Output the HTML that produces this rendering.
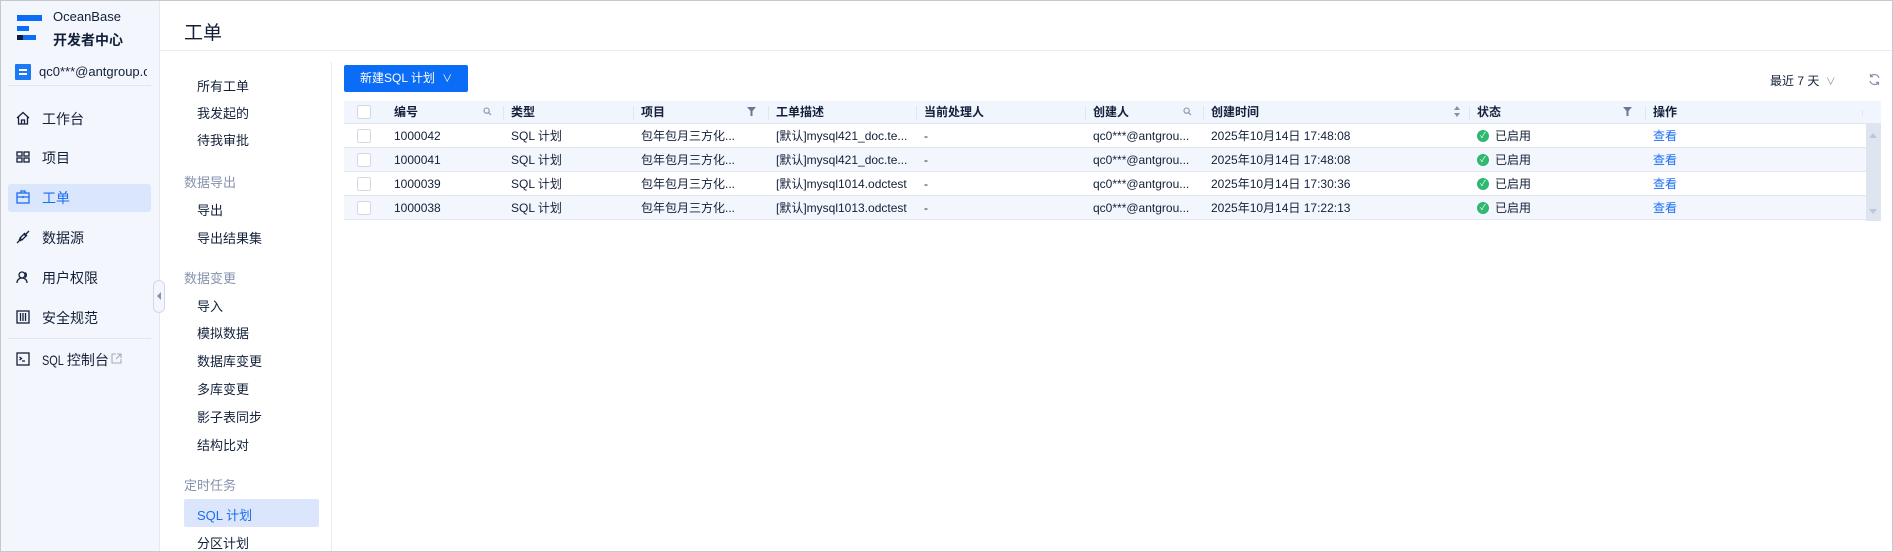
<!DOCTYPE html><html><head><meta charset="utf-8"><style>
*{box-sizing:border-box;margin:0;padding:0}
body{width:1893px;height:552px;overflow:hidden;background:#fff;font-family:"Liberation Sans","Noto Sans CJK SC",sans-serif;color:#132039;position:relative}
.a{position:absolute;white-space:nowrap}
#frame{position:absolute;left:0;top:0;width:1893px;height:552px;border:1px solid #c8c8c8;pointer-events:none}
.side{left:0;top:0;width:160px;height:552px;background:#f3f6fc;border-right:1px solid #e5e8ef}
.mi{font-size:14px;color:#132039;left:42px}
.ic{left:15px;width:16px;height:16px}
.sub{font-size:13px;color:#132039;left:197px}
.grp{font-size:13px;color:#8592ad;left:184px}
.th{font-size:12px;font-weight:bold;color:#132039;line-height:23px}
.td{font-size:12px;color:#132039;line-height:24px}
.cb{width:14px;height:14px;border:1px solid #d3d8e2;border-radius:2px;background:#fff;left:357px}
.row{left:344px;width:1522px;height:24px;border-bottom:1px solid #e2e6ee}
.sep{width:1px;height:14px;background:#e2e6ee;top:106px}
.ok{width:12px;height:12px;border-radius:50%;background:#2eb872;color:#fff;font-size:8px;line-height:12px;text-align:center}
</style></head><body>
<div class="a side"></div>
<div class="a" style="left:17px;top:15px;width:25px;height:6px;background:#0b6cf7"></div>
<div class="a" style="left:17px;top:26px;width:12px;height:5px;background:#0b6cf7"></div>
<div class="a" style="left:17px;top:35px;width:6px;height:5px;background:#0a1a3a"></div>
<div class="a" style="left:23px;top:35px;width:13px;height:5px;background:#0b6cf7"></div>
<div class="a" style="left:53px;top:9px;font-size:13px">OceanBase</div>
<div class="a" style="left:53px;top:30px;font-size:14px;font-weight:bold">开发者中心</div>
<div class="a" style="left:15px;top:64px;width:16px;height:16px;background:#1b79f5;border-radius:1px"><div style="margin:5px 4px;width:8px;height:6px;border-top:2px solid #fff;border-bottom:2px solid #fff"></div></div>
<div class="a" style="left:39px;top:64px;width:108px;overflow:hidden;font-size:13px">qc0***@antgroup.com</div>
<div class="a" style="left:8px;top:85px;width:143px;height:1px;background:#e1e6ef"></div>
<div class="a" style="left:8px;top:184px;width:143px;height:28px;background:#d9e6fb;border-radius:3px"></div>
<svg class="a ic" style="top:110px" viewBox="0 0 16 16" fill="none" stroke="#132039" stroke-width="1.3"><path d="M2 8L8 2.5 14 8M3.5 6.5V14h9V6.5M6.5 14v-4h3v4"/></svg>
<div class="a mi" style="top:109px">工作台</div>
<svg class="a ic" style="top:149px" viewBox="0 0 16 16" fill="none" stroke="#132039" stroke-width="1.3"><rect x="2" y="3" width="5" height="4"/><rect x="9" y="3" width="5" height="4"/><rect x="2" y="9" width="5" height="4"/><rect x="9" y="9" width="5" height="4"/></svg>
<div class="a mi" style="top:148px">项目</div>
<svg class="a ic" style="top:189px" viewBox="0 0 16 16" fill="none" stroke="#1b6ef3" stroke-width="1.3"><rect x="2" y="4" width="12" height="10"/><path d="M6 4V2h4v2M2 8h12M8 7v2"/></svg>
<div class="a mi" style="top:188px;color:#1b6ef3">工单</div>
<svg class="a ic" style="top:229px" viewBox="0 0 16 16" fill="none" stroke="#132039" stroke-width="1.3"><path d="M2 14l3-3M11 5l3-3M5 9l4-4 2 2-4 4zM4 10l2 2M9 4l3 3"/></svg>
<div class="a mi" style="top:228px">数据源</div>
<svg class="a ic" style="top:269px" viewBox="0 0 16 16" fill="none" stroke="#132039" stroke-width="1.3"><circle cx="7" cy="6" r="3"/><path d="M2 14c0-3 2-5 5-5s5 2 5 5M10 3.5a3 3 0 010 5"/></svg>
<div class="a mi" style="top:268px">用户权限</div>
<svg class="a ic" style="top:309px" viewBox="0 0 16 16" fill="none" stroke="#132039" stroke-width="1.3"><rect x="2" y="2" width="12" height="12"/><path d="M5.5 4v8M8 4v8M10.5 4v8"/></svg>
<div class="a mi" style="top:308px">安全规范</div>
<div class="a" style="left:8px;top:338px;width:143px;height:1px;background:#e1e6ef"></div>
<svg class="a ic" style="top:351px" viewBox="0 0 16 16" fill="none" stroke="#132039" stroke-width="1.3"><rect x="2" y="2" width="12" height="12"/><path d="M4.5 6l2 1.5-2 1.5M7 10h3"/></svg>
<div class="a mi" style="top:350px"><span style="display:inline-block;transform:scaleX(.78);transform-origin:0 50%;margin-right:-7px">SQL</span> 控制台</div>
<svg class="a" style="left:111px;top:353px" width="11" height="11" viewBox="0 0 11 11" fill="none" stroke="#a3acbe" stroke-width="1.1"><path d="M5 1H1v9h9V6M6 1h4v4M10 1L5 6"/></svg>
<div class="a" style="left:153px;top:280px;width:12px;height:33px;border:1px solid #d3d9e4;border-radius:6px;background:#f3f6fc"></div>
<div class="a" style="left:157px;top:292px;width:0;height:0;border-top:4px solid transparent;border-bottom:4px solid transparent;border-right:4px solid #8592ad"></div>
<div class="a" style="left:184px;top:18px;font-size:19px">工单</div>
<div class="a" style="left:160px;top:50px;width:1733px;height:1px;background:#e8ebf1"></div>
<div class="a" style="left:331px;top:62px;width:1px;height:490px;background:#e8ebf1"></div>
<div class="a sub" style="top:76px">所有工单</div>
<div class="a sub" style="top:103px">我发起的</div>
<div class="a sub" style="top:130px">待我审批</div>
<div class="a grp" style="top:172px">数据导出</div>
<div class="a sub" style="top:200px">导出</div>
<div class="a sub" style="top:228px">导出结果集</div>
<div class="a grp" style="top:268px">数据变更</div>
<div class="a sub" style="top:296px">导入</div>
<div class="a sub" style="top:323px">模拟数据</div>
<div class="a sub" style="top:351px">数据库变更</div>
<div class="a sub" style="top:379px">多库变更</div>
<div class="a sub" style="top:407px">影子表同步</div>
<div class="a sub" style="top:435px">结构比对</div>
<div class="a grp" style="top:475px">定时任务</div>
<div class="a" style="left:184px;top:499px;width:135px;height:28px;background:#dbe5fb;border-radius:2px"></div>
<div class="a sub" style="top:505px;color:#1b6ef3">SQL 计划</div>
<div class="a sub" style="top:533px">分区计划</div>
<div class="a" style="left:344px;top:65px;width:124px;height:27px;background:#0b6cf7;border-radius:2px;color:#fff;font-size:12px;line-height:27px;padding-left:16px">新建SQL 计划 <span style="font-size:10px;margin-left:4px">∨</span></div>
<div class="a" style="left:1770px;top:72px;font-size:12px;color:#132039">最近 7 天 <span style="color:#8592ad;font-size:10px;margin-left:3px">∨</span></div>
<svg class="a" style="left:1868px;top:73px" width="13" height="13" viewBox="0 0 13 13" fill="none" stroke="#8592ad" stroke-width="1.2"><path d="M11 5A4.8 4.8 0 002.5 3.5M2 8a4.8 4.8 0 008.5 1.5M2.5 1v2.7h2.7M10.5 12V9.3H7.8"/></svg>
<div class="a" style="left:344px;top:101px;width:1537px;height:23px;background:#f1f5fd;border-bottom:1px solid #e2e6ee"></div>
<div class="a" style="left:1866px;top:124px;width:15px;height:97px;background:#dfe5f0"></div>
<div class="a" style="left:1869px;top:133px;border-left:4px solid transparent;border-right:4px solid transparent;border-bottom:5px solid #bfc7d6"></div>
<div class="a" style="left:1869px;top:209px;border-left:4px solid transparent;border-right:4px solid transparent;border-top:5px solid #bfc7d6"></div>
<div class="a row" style="top:124px;background:#fff"></div>
<div class="a row" style="top:148px;background:#f3f6fc"></div>
<div class="a row" style="top:172px;background:#fff"></div>
<div class="a row" style="top:196px;background:#f3f6fc"></div>
<div class="a cb" style="top:105px"></div><div class="a cb" style="top:129px"></div><div class="a cb" style="top:153px"></div><div class="a cb" style="top:177px"></div><div class="a cb" style="top:201px"></div>
<div class="a th" style="left:394px;top:101px">编号</div>
<div class="a sep" style="left:503px"></div>
<div class="a th" style="left:511px;top:101px">类型</div>
<div class="a sep" style="left:633px"></div>
<div class="a th" style="left:641px;top:101px">项目</div>
<div class="a sep" style="left:768px"></div>
<div class="a th" style="left:776px;top:101px">工单描述</div>
<div class="a sep" style="left:916px"></div>
<div class="a th" style="left:924px;top:101px">当前处理人</div>
<div class="a sep" style="left:1085px"></div>
<div class="a th" style="left:1093px;top:101px">创建人</div>
<div class="a sep" style="left:1203px"></div>
<div class="a th" style="left:1211px;top:101px">创建时间</div>
<div class="a sep" style="left:1469px"></div>
<div class="a th" style="left:1477px;top:101px">状态</div>
<div class="a sep" style="left:1645px"></div>
<div class="a th" style="left:1653px;top:101px">操作</div>
<div class="a sep" style="left:1862px;height:6px;top:110px"></div>
<svg class="a" style="left:483px;top:107px" width="9" height="9" viewBox="0 0 9 9" fill="none" stroke="#8592ad" stroke-width="1.1"><circle cx="3.6" cy="3.6" r="2.6"/><path d="M5.5 5.5L8 8"/></svg>
<svg class="a" style="left:1183px;top:107px" width="9" height="9" viewBox="0 0 9 9" fill="none" stroke="#8592ad" stroke-width="1.1"><circle cx="3.6" cy="3.6" r="2.6"/><path d="M5.5 5.5L8 8"/></svg>
<svg class="a" style="left:747px;top:107px" width="9" height="9" viewBox="0 0 9 9" fill="#6b7891"><path d="M0 0h9L5.5 4v5h-2V4z"/></svg>
<svg class="a" style="left:1623px;top:107px" width="9" height="9" viewBox="0 0 9 9" fill="#6b7891"><path d="M0 0h9L5.5 4v5h-2V4z"/></svg>
<svg class="a" style="left:1453px;top:105px" width="8" height="13" viewBox="0 0 8 13" fill="#8592ad"><path d="M4 1l3 4H1zM4 12l3-4H1z"/></svg>
<div class="a td" style="left:394px;top:124px">1000042</div><div class="a td" style="left:511px;top:124px">SQL 计划</div><div class="a td" style="left:641px;top:124px">包年包月三方化...</div><div class="a td" style="left:776px;top:124px">[默认]mysql421_doc.te...</div><div class="a td" style="left:924px;top:124px">-</div><div class="a td" style="left:1093px;top:124px">qc0***@antgrou...</div><div class="a td" style="left:1211px;top:124px">2025年10月14日 17:48:08</div>
<div class="a td" style="left:394px;top:148px">1000041</div><div class="a td" style="left:511px;top:148px">SQL 计划</div><div class="a td" style="left:641px;top:148px">包年包月三方化...</div><div class="a td" style="left:776px;top:148px">[默认]mysql421_doc.te...</div><div class="a td" style="left:924px;top:148px">-</div><div class="a td" style="left:1093px;top:148px">qc0***@antgrou...</div><div class="a td" style="left:1211px;top:148px">2025年10月14日 17:48:08</div>
<div class="a td" style="left:394px;top:172px">1000039</div><div class="a td" style="left:511px;top:172px">SQL 计划</div><div class="a td" style="left:641px;top:172px">包年包月三方化...</div><div class="a td" style="left:776px;top:172px">[默认]mysql1014.odctest</div><div class="a td" style="left:924px;top:172px">-</div><div class="a td" style="left:1093px;top:172px">qc0***@antgrou...</div><div class="a td" style="left:1211px;top:172px">2025年10月14日 17:30:36</div>
<div class="a td" style="left:394px;top:196px">1000038</div><div class="a td" style="left:511px;top:196px">SQL 计划</div><div class="a td" style="left:641px;top:196px">包年包月三方化...</div><div class="a td" style="left:776px;top:196px">[默认]mysql1013.odctest</div><div class="a td" style="left:924px;top:196px">-</div><div class="a td" style="left:1093px;top:196px">qc0***@antgrou...</div><div class="a td" style="left:1211px;top:196px">2025年10月14日 17:22:13</div>
<div class="a ok" style="left:1477px;top:130px">✓</div><div class="a td" style="left:1495px;top:124px">已启用</div><div class="a td" style="left:1653px;top:124px;color:#1b6ef3">查看</div>
<div class="a ok" style="left:1477px;top:154px">✓</div><div class="a td" style="left:1495px;top:148px">已启用</div><div class="a td" style="left:1653px;top:148px;color:#1b6ef3">查看</div>
<div class="a ok" style="left:1477px;top:178px">✓</div><div class="a td" style="left:1495px;top:172px">已启用</div><div class="a td" style="left:1653px;top:172px;color:#1b6ef3">查看</div>
<div class="a ok" style="left:1477px;top:202px">✓</div><div class="a td" style="left:1495px;top:196px">已启用</div><div class="a td" style="left:1653px;top:196px;color:#1b6ef3">查看</div>
<div id="frame"></div>
</body></html>
